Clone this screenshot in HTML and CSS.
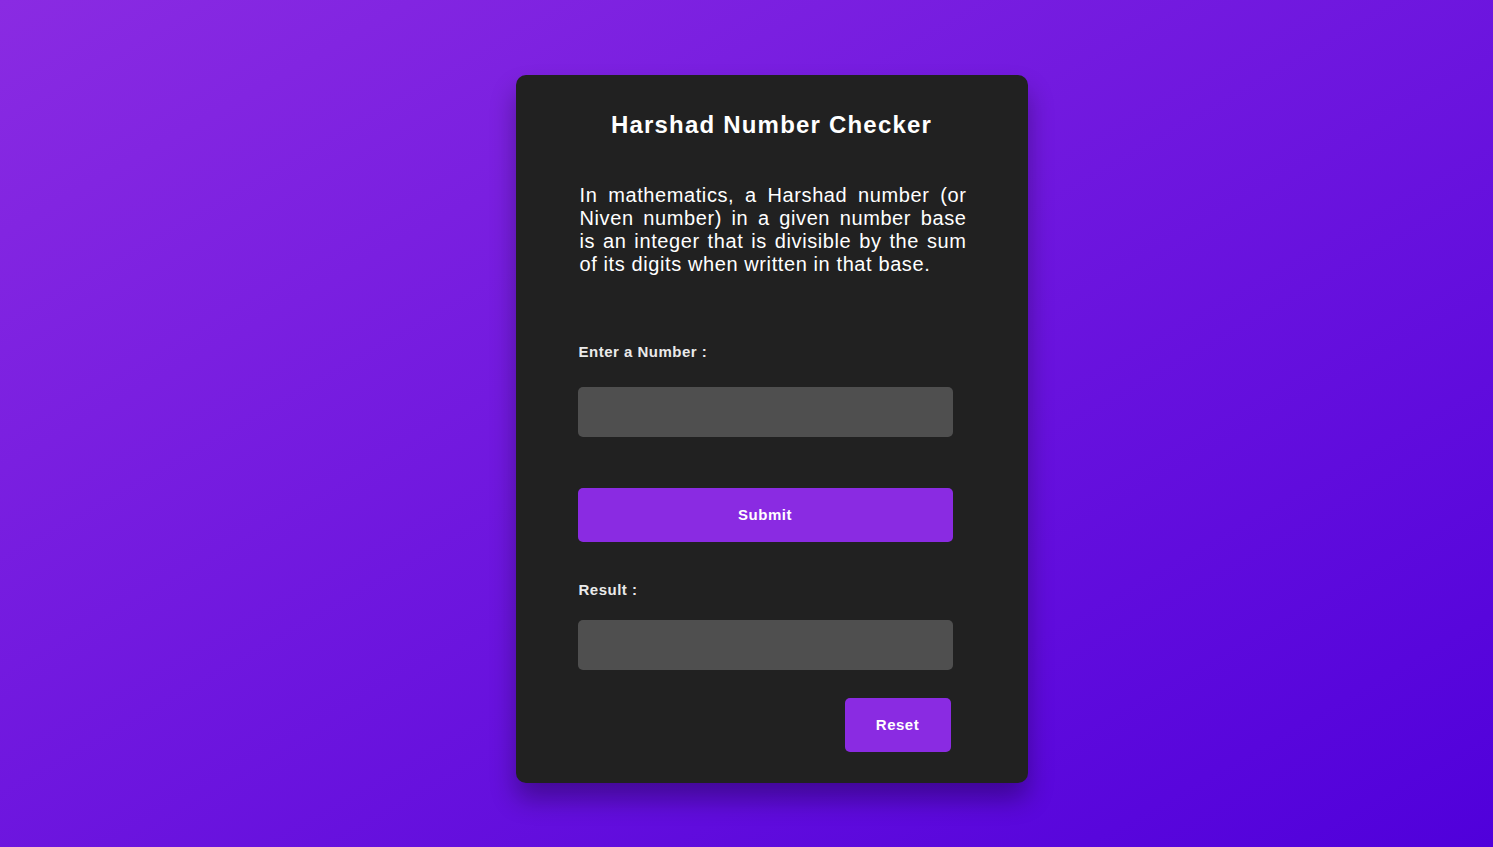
FILE: index.html
```html
<!DOCTYPE html>
<html lang="en">
<head>
<meta charset="UTF-8">
<title>Harshad Number Checker</title>
<link rel="stylesheet" href="styles.css">
</head>
<body>
<main class="page">
  <section class="card">
    <h1 class="title">Harshad Number Checker</h1>
    <p class="intro">In mathematics, a Harshad number (or Niven number) in a given number base is an integer that is divisible by the sum of its digits when written in that base.</p>
    <div class="form">
      <label class="label label-number" for="num">Enter a Number :</label>
      <input class="field" id="num" type="text">
      <button class="btn btn-submit" type="button">Submit</button>
      <label class="label label-result" for="res">Result :</label>
      <input class="field field-result" id="res" type="text" readonly>
      <button class="btn btn-reset" type="button">Reset</button>
    </div>
  </section>
</main>
</body>
</html>
```

FILE: styles.css
```css
* { box-sizing: border-box; }
html, body { margin: 0; padding: 0; height: 100%; }
body {
  font-family: "Liberation Sans", Arial, sans-serif;
  background: linear-gradient(to bottom right, #8a2be2, #5000db);
  min-height: 847px;
}
.page {
  display: flex;
  justify-content: center;
  padding-top: 75px;
  padding-left: 50px;
}
.card {
  width: 512px;
  background: #212121;
  border-radius: 10px;
  box-shadow: 0 16px 26px rgba(0, 0, 0, 0.32);
  padding: 36px 62px 31px 62px;
  display: flex;
  flex-direction: column;
}
.title {
  margin: 0;
  color: #fff;
  font-size: 24px;
  line-height: 28px;
  font-weight: bold;
  text-align: center;
  letter-spacing: 1.2px;
}
.intro {
  margin: 45px -1px 0 2px;
  color: #fff;
  font-size: 20px;
  line-height: 23px;
  text-align: justify;
  letter-spacing: 0.6px;
}
.form {
  width: 375px;
  display: flex;
  flex-direction: column;
}
.label {
  color: #eaeaea;
  font-size: 15px;
  line-height: 18px;
  font-weight: bold;
  letter-spacing: 0.5px;
  padding-left: 1px;
}
.label-number { margin-top: 67px; }
.label-result { margin-top: 39px; }
.field {
  height: 50px;
  width: 375px;
  border: none;
  border-radius: 5px;
  background: #4f4f4f;
  color: #fff;
  font-size: 18px;
  padding: 0 12px;
  outline: none;
}
.label-number + .field { margin-top: 26px; }
.field-result { margin-top: 21px; }
.btn {
  height: 54px;
  border: none;
  border-radius: 5px;
  background: #8a2be2;
  color: #fff;
  font-family: "Liberation Sans", Arial, sans-serif;
  font-size: 15px;
  line-height: 18px;
  font-weight: bold;
  letter-spacing: 0.5px;
  padding: 0;
  cursor: pointer;
}
.btn-submit { margin-top: 51px; width: 375px; }
.btn-reset {
  margin-top: 28px;
  width: 106px;
  align-self: flex-end;
  margin-right: 2px;
}
```
